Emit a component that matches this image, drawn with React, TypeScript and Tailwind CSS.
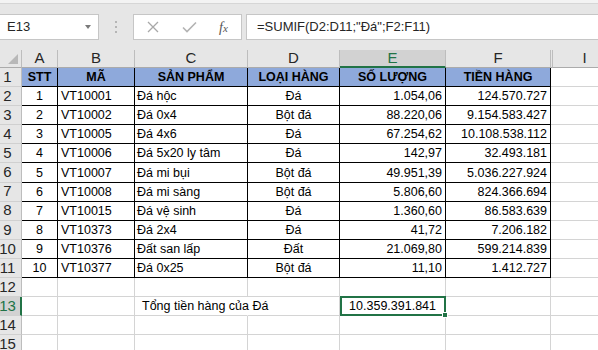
import * as React from "react";

const rows: [string, string, string, string, string, string][] = [
  ["1", "VT10001", "Đá hộc", "Đá", "1.054,06", "124.570.727"],
  ["2", "VT10002", "Đá 0x4", "Bột đá", "88.220,06", "9.154.583.427"],
  ["3", "VT10005", "Đá 4x6", "Đá", "67.254,62", "10.108.538.112"],
  ["4", "VT10006", "Đá 5x20 ly tâm", "Đá", "142,97", "32.493.181"],
  ["5", "VT10007", "Đá mi bụi", "Bột đá", "49.951,39", "5.036.227.924"],
  ["6", "VT10008", "Đá mi sàng", "Bột đá", "5.806,60", "824.366.694"],
  ["7", "VT10015", "Đá vệ sinh", "Đá", "1.360,60", "86.583.639"],
  ["8", "VT10373", "Đá 2x4", "Đá", "41,72", "7.206.182"],
  ["9", "VT10376", "Đất san lấp", "Đất", "21.069,80", "599.214.839"],
  ["10", "VT10377", "Đá 0x25", "Bột đá", "11,10", "1.412.727"],
];

const head = ["STT", "MÃ", "SẢN PHẨM", "LOẠI HÀNG", "SỐ LƯỢNG", "TIỀN HÀNG"];
const align = [
  "justify-center",
  "justify-start pl-[3px]",
  "justify-start pl-[2px]",
  "justify-center",
  "justify-end pr-[3px]",
  "justify-end pr-[3px]",
];

function RowHead({ n, active }: { n: number; active?: boolean }) {
  return (
    <div
      className={
        active
          ? "flex h-[19.1px] items-center justify-center border-b border-r-2 border-b-[#d0d0d0] border-r-[#217346] bg-[#d2d2d2] pr-[5px] text-[15px] text-[#217346]"
          : "flex h-[19.1px] items-center justify-center border-b border-r border-b-[#d0d0d0] border-r-[#bdbdbd] bg-[#e6e6e6] pr-[6px] text-[15px] text-[#262626]"
      }
    >
      {n}
    </div>
  );
}

function Cell(props: { children?: React.ReactNode; cls: string; table?: boolean }) {
  return (
    <div
      className={
        "flex h-[19.1px] items-end whitespace-nowrap border-b border-r pb-[1px] leading-[15px] " +
        (props.table ? "border-black " : "border-[#d4d4d4] ") +
        props.cls
      }
    >
      {props.children}
    </div>
  );
}

export default function App() {
  return (
    <div className="h-[350px] w-[598px] overflow-hidden bg-white font-['Liberation_Sans',Arial,sans-serif] text-black">
      {/* formula bar */}
      <div className="h-[4px] border-b border-[#d6d6d6] bg-[#f3f3f3]" />
      <div className="flex h-[46px] items-start bg-[#e6e6e6] pt-[10px]">
        <div className="relative flex h-[26px] w-[99px] items-center border border-l-0 border-[#c6c6c6] bg-white pl-[7px] text-[13px] text-[#262626]">
          E13
          <div className="absolute right-[7px] top-[10px] h-0 w-0 border-x-[3px] border-t-[4px] border-x-transparent border-t-[#7a7a7a]" />
        </div>
        <div className="mx-[16px] flex h-[26px] flex-col items-center justify-center gap-[3px]">
          <div className="h-[2px] w-[2px] bg-[#b5b5b5]" />
          <div className="h-[2px] w-[2px] bg-[#b5b5b5]" />
          <div className="h-[2px] w-[2px] bg-[#b5b5b5]" />
        </div>
        <div className="flex h-[26px] w-[109px] items-center border border-[#c6c6c6] bg-white">
          <svg width="12" height="12" viewBox="0 0 12 12" className="ml-[13px]">
            <path d="M1 1L11 11M11 1L1 11" stroke="#a8a8a8" strokeWidth="1.3" fill="none" />
          </svg>
          <svg width="15" height="12" viewBox="0 0 15 12" className="ml-[23px]">
            <path d="M1 6.5L5 10.5L14 1.5" stroke="#b3b3b3" strokeWidth="1.6" fill="none" />
          </svg>
          <span className="ml-[22px] font-['Liberation_Serif',serif] text-[14px] italic text-[#555]">
            f<span className="text-[11px]">x</span>
          </span>
        </div>
        <div className="ml-[4px] flex h-[26px] flex-1 items-center border border-r-0 border-[#c6c6c6] bg-white pl-[10px] text-[13px] text-[#262626]">
          =SUMIF(D2:D11;"Đá";F2:F11)
        </div>
      </div>

      {/* sheet */}
      <div className="grid w-[617px] grid-cols-[22px_36px_77px_113px_92px_106px_105px_2px_64px] text-[12.5px]">
        {/* column letters */}
        <div className="relative h-[18px] border-b border-r border-b-[#ababab] border-r-[#bdbdbd] bg-[#e6e6e6]">
          <div className="absolute bottom-[3px] right-[3px] h-0 w-0 border-b-[10px] border-l-[10px] border-b-[#b8b8b8] border-l-transparent" />
        </div>
        {["A", "B", "C", "D"].map((c) => (
          <div
            key={c}
            className="flex h-[18px] items-center justify-center border-b border-r border-b-[#ababab] border-r-[#bdbdbd] bg-[#e6e6e6] text-[15px] text-[#262626]"
          >
            {c}
          </div>
        ))}
        <div className="flex h-[18px] items-center justify-center border-b-2 border-r border-b-[#217346] border-r-[#bdbdbd] bg-[#d2d2d2] pt-[1px] text-[15px] text-[#217346]">
          E
        </div>
        <div className="flex h-[18px] items-center justify-center border-b border-r border-b-[#ababab] border-r-[#bdbdbd] bg-[#e6e6e6] text-[15px] text-[#262626]">
          F
        </div>
        <div className="h-[18px] border-b border-r border-b-[#ababab] border-r-[#bdbdbd] bg-[#e6e6e6]" />
        <div className="flex h-[18px] items-center justify-center border-b border-r border-b-[#ababab] border-r-[#bdbdbd] bg-[#e6e6e6] text-[15px] text-[#262626]">
          I
        </div>

        {/* row 1: headers */}
        <RowHead n={1} />
        {head.map((h) => (
          <Cell key={h} table cls="justify-center bg-[#8ea9db] font-bold">
            {h}
          </Cell>
        ))}
        <div className="h-[19.1px] border-b border-[#d4d4d4]" />
        <Cell cls="" />

        {/* data rows */}
        {rows.map((r, ri) => (
          <React.Fragment key={ri}>
            <RowHead n={ri + 2} />
            {r.map((v, i) => (
              <Cell key={i} table cls={align[i]}>
                {v}
              </Cell>
            ))}
            <div className="h-[19.1px] border-b border-[#d4d4d4]" />
            <Cell cls="" />
          </React.Fragment>
        ))}

        {/* rows 12-15 */}
        {[12, 13, 14, 15].map((n) => (
          <React.Fragment key={n}>
            <RowHead n={n} active={n === 13} />
            <Cell cls="" />
            <Cell cls="" />
            {n === 13 ? (
              <Cell cls="relative z-10 border-r-transparent pl-[7px]">Tổng tiền hàng của Đá</Cell>
            ) : (
              <Cell cls="" />
            )}
            <Cell cls="" />
            {n === 13 ? (
              <div className="relative flex h-[19.1px] items-end justify-end border-b border-r border-[#d4d4d4] pb-[1px] pr-[9px] leading-[15px]">
                10.359.391.841
                <div className="absolute -top-px left-0 -right-px bottom-[-1px] border-2 border-[#217346]">
                  <div className="absolute -bottom-[4px] -right-[4px] h-[6px] w-[6px] border border-white bg-[#217346]" />
                </div>
              </div>
            ) : (
              <Cell cls="" />
            )}
            <Cell cls="" />
            <div className="h-[19.1px] border-b border-[#d4d4d4]" />
            <Cell cls="" />
          </React.Fragment>
        ))}
      </div>
    </div>
  );
}
